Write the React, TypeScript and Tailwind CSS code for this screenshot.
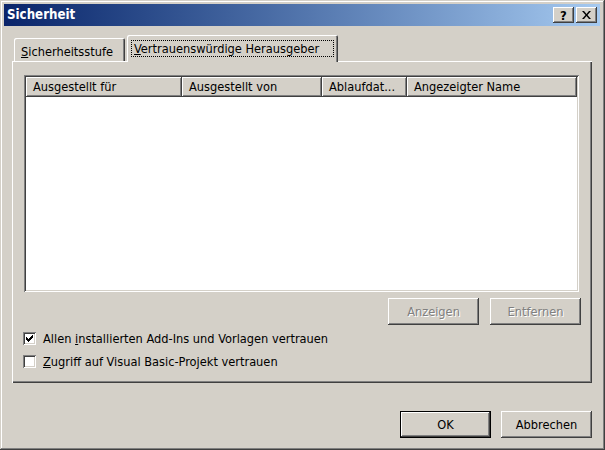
import { useState } from "react";

const font = { fontFamily: '"DejaVu Sans Condensed", "DejaVu Sans", "Liberation Sans", sans-serif' };

// win2k 3d edges
const raised =
  "shadow-[inset_-1px_-1px_#404040,inset_1px_1px_#ffffff,inset_-2px_-2px_#808080,inset_2px_2px_#d4d0c8]";
const sunken =
  "shadow-[inset_1px_1px_#808080,inset_-1px_-1px_#ffffff,inset_2px_2px_#404040,inset_-2px_-2px_#d4d0c8]";

const columns = [
  { label: "Ausgestellt für", w: "w-[156px]" },
  { label: "Ausgestellt von", w: "w-[140px]" },
  { label: "Ablaufdat...", w: "w-[85px]" },
  { label: "Angezeigter Name", w: "w-[170px]" },
];

function TitleButton({ children }: { children: React.ReactNode }) {
  return (
    <div
      className={`w-[21px] h-[16px] bg-[#d4d0c8] flex items-center justify-center text-black font-bold text-[13px] leading-none ${raised}`}
    >
      {children}
    </div>
  );
}

function Button({ label, disabled, isDefault }: { label: string; disabled?: boolean; isDefault?: boolean }) {
  return (
    <div
      className={`w-[91px] h-[27px] flex items-center justify-center text-[12.7px] bg-[#d4d0c8] ${
        isDefault ? "border border-black" : ""
      }`}
    >
      <div
        className={`w-full h-full flex items-center justify-center ${raised} ${
          disabled ? "text-[#808080] [text-shadow:1px_1px_0_#ffffff]" : "text-black"
        }`}
      >
        {label}
      </div>
    </div>
  );
}

function Checkbox({ checked, children }: { checked: boolean; children: React.ReactNode }) {
  return (
    <div className="flex items-center h-[13px]">
      <div className={`w-[13px] h-[13px] bg-white flex items-center justify-center ${sunken}`}>
        {checked && (
          <svg width="7" height="7" viewBox="0 0 7 7" shapeRendering="crispEdges">
            <path d="M0 2h1v1h1v1h1v-1h1v-1h1v-1h1v-1h1v3h-1v1h-1v1h-1v1h-1v1h-1v-1h-1v-1h-1v-1h-1z" fill="#000" />
          </svg>
        )}
      </div>
      <span className="ml-[7px] text-[12.7px] text-black">{children}</span>
    </div>
  );
}

export default function App() {
  const [tab] = useState(1);

  return (
    <div
      style={font}
      className="w-[605px] h-[450px] bg-[#d4d0c8] pl-[4px] pr-[5px] pt-[4px] flex flex-col shadow-[inset_-1px_-1px_#404040,inset_1px_1px_#d4d0c8,inset_-2px_-2px_#808080,inset_2px_2px_#ffffff]"
    >
      {/* title bar */}
      <div className="h-[22px] flex items-center bg-gradient-to-r from-[#0a246a] to-[#a6caf0] pl-[3px] pr-[3px]">
        <span className="text-white font-bold text-[13.2px]">Sicherheit</span>
        <div className="ml-auto flex gap-[2px]">
          <TitleButton>?</TitleButton>
          <TitleButton>
            <svg width="9" height="8" viewBox="0 0 9 8">
              <path d="M0 0h2l2.5 3 2.5-3h2l-3.5 4 3.5 4h-2l-2.5-3-2.5 3h-2l3.5-4z" fill="#000" />
            </svg>
          </TitleButton>
        </div>
      </div>

      {/* tabs */}
      <div className="ml-[8px] mt-[9px] w-[580px] flex flex-col">
        <div className="flex items-end h-[27px] -mb-px pl-[2px]">
          <div
            className={`w-[111px] h-[24px] flex items-start pt-[4px] pl-[7px] text-[12.7px] text-black rounded-tl-[2px] rounded-tr-[2px] ${
              tab === 0 ? "" : ""
            } shadow-[inset_1px_1px_#ffffff,inset_-1px_0_#404040,inset_-2px_0_#808080]`}
          >
            <span>
              <span className="underline">S</span>icherheitsstufe
            </span>
          </div>
          <div className="relative z-10 ml-[2px] w-[211px] h-[27px] bg-[#d4d0c8] px-[4px] pt-[5px] text-[12.7px] text-black rounded-tl-[2px] rounded-tr-[2px] shadow-[inset_1px_1px_#ffffff,inset_-1px_0_#404040,inset_-2px_0_#808080]">
            <div className="h-[17px] border border-dotted border-black flex items-center px-[2px]">
              <span>
                <span className="underline">V</span>ertrauenswürdige Herausgeber
              </span>
            </div>
          </div>
        </div>

        {/* panel */}
        <div className="h-[322px] flex flex-col shadow-[inset_1px_1px_#ffffff,inset_-1px_-1px_#404040,inset_-2px_-2px_#808080] pt-[14px] pl-[12px] pr-[13px]">
          <div className={`h-[217px] bg-white p-[2px] ${sunken}`}>
            <div className="flex h-[20px]">
              {columns.map((c) => (
                <div
                  key={c.label}
                  className={`${c.w} h-full bg-[#d4d0c8] flex items-center pl-[7px] text-[12.7px] text-black whitespace-nowrap overflow-hidden ${raised}`}
                >
                  {c.label}
                </div>
              ))}
            </div>
          </div>

          <div className="flex justify-end gap-[11px] mt-[6px] -mr-[2px]">
            <Button label="Anzeigen" disabled />
            <Button label="Entfernen" disabled />
          </div>

          <div className="flex flex-col gap-[10px] mt-[7px] -ml-[1px]">
            <Checkbox checked>
              Allen <span className="underline">i</span>nstallierten Add-Ins und Vorlagen vertrauen
            </Checkbox>
            <Checkbox checked={false}>
              <span className="underline">Z</span>ugriff auf Visual Basic-Projekt vertrauen
            </Checkbox>
          </div>
        </div>
      </div>

      {/* dialog buttons */}
      <div className="flex justify-end gap-[10px] mt-[28px] pr-[8px]">
        <Button label="OK" isDefault />
        <Button label="Abbrechen" />
      </div>
    </div>
  );
}
